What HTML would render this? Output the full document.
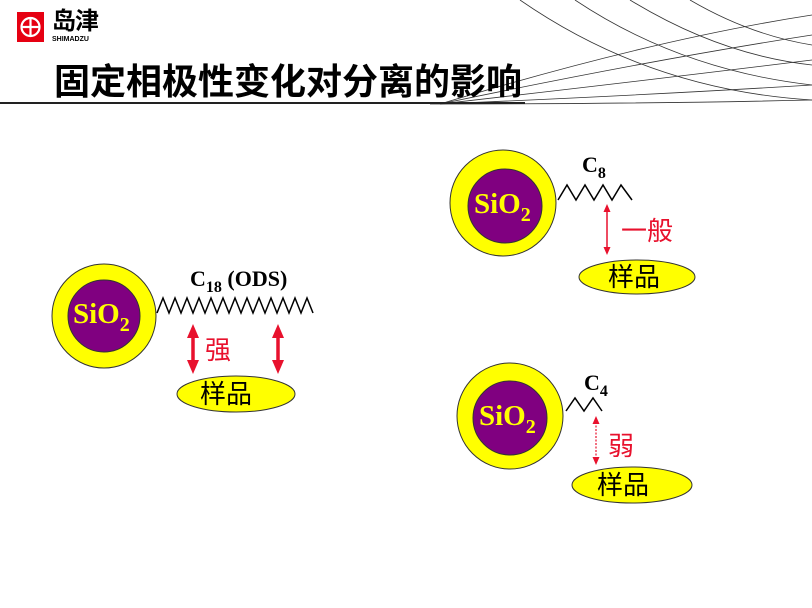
<!DOCTYPE html>
<html><head><meta charset="utf-8"><style>
body{margin:0;width:812px;height:608px;background:#fff;overflow:hidden;position:relative;font-family:"Liberation Sans","Noto Sans CJK SC",sans-serif}
.t{position:absolute;white-space:nowrap}
</style></head><body>
<svg width="812" height="608" style="position:absolute;left:0;top:0">
<g fill="none" stroke="#333" stroke-width="0.8">
<path d="M520 0 Q650 90 812 100"/>
<path d="M575 0 Q680 70 812 85"/>
<path d="M630 0 Q720 55 812 65"/>
<path d="M690 0 Q750 35 812 45"/>
<path d="M440 104 Q650 40 812 15"/>
<path d="M440 104 Q650 60 812 35"/>
<path d="M440 104 Q650 80 812 60"/>
<path d="M440 104 Q650 95 812 85"/>
<path d="M430 104 Q640 104 812 100"/>
</g>
<line x1="0" y1="103" x2="525" y2="103" stroke="#222" stroke-width="2"/>
<rect x="17" y="12" width="27" height="30" fill="#e60012"/>
<circle cx="30.5" cy="27" r="9" fill="none" stroke="#fff" stroke-width="2.2"/>
<line x1="21.5" y1="27" x2="39.5" y2="27" stroke="#fff" stroke-width="2.2"/>
<line x1="30.5" y1="18" x2="30.5" y2="36" stroke="#fff" stroke-width="2.2"/>
<defs><marker id="ah" markerUnits="userSpaceOnUse" markerWidth="14" markerHeight="12" refX="2" refY="6" orient="auto-start-reverse"><path d="M0 0 L14 6 L0 12Z" fill="#e8112d"/></marker>
<marker id="ah2" markerUnits="userSpaceOnUse" markerWidth="8" markerHeight="7" refX="2" refY="3.5" orient="auto-start-reverse"><path d="M0 0 L8 3.5 L0 7Z" fill="#e8112d"/></marker></defs>
<circle cx="104" cy="316" r="52" fill="#ffff00" stroke="#333" stroke-width="1"/>
<circle cx="104" cy="316" r="36" fill="#800080" stroke="#333" stroke-width="1"/>
<polyline fill="none" stroke="#000" stroke-width="1.5" points="157,313 163,298 169,313 175,298 181,313 187,298 193,313 199,298 205,313 211,298 217,313 223,298 229,313 235,298 241,313 247,298 253,313 259,298 265,313 271,298 277,313 283,298 289,313 295,298 301,313 307,298 313,313"/>
<line x1="193" y1="336" x2="193" y2="362" stroke="#e8112d" stroke-width="3.5" marker-start="url(#ah)" marker-end="url(#ah)"/>
<line x1="278" y1="336" x2="278" y2="362" stroke="#e8112d" stroke-width="3.5" marker-start="url(#ah)" marker-end="url(#ah)"/>
<ellipse cx="236" cy="394" rx="59" ry="18" fill="#ffff00" stroke="#333"/>
<circle cx="503" cy="203" r="53" fill="#ffff00" stroke="#333"/>
<circle cx="505" cy="206" r="37" fill="#800080" stroke="#333"/>
<polyline fill="none" stroke="#000" stroke-width="1.5" points="558,200 567,185 576,200 585,185 594,200 603,185 612,200 621,185 632,200"/>
<line x1="607" y1="210" x2="607" y2="249" stroke="#e8112d" stroke-width="1.5" marker-start="url(#ah2)" marker-end="url(#ah2)"/>
<ellipse cx="637" cy="277" rx="58" ry="17" fill="#ffff00" stroke="#333"/>
<circle cx="510" cy="416" r="53" fill="#ffff00" stroke="#333"/>
<circle cx="510" cy="418" r="37" fill="#800080" stroke="#333"/>
<polyline fill="none" stroke="#000" stroke-width="1.5" points="566,411 575,398 584,411 593,398 602,411"/>
<line x1="596" y1="422" x2="596" y2="459" stroke="#e8112d" stroke-width="1.2" stroke-dasharray="2,1.5" marker-start="url(#ah2)" marker-end="url(#ah2)"/>
<ellipse cx="632" cy="485" rx="60" ry="18" fill="#ffff00" stroke="#333"/>
</svg>
<div class="t" style="left:52px;top:9px;font-size:24px;line-height:26px;color:#000;font-weight:bold;letter-spacing:-1px">岛津</div>
<div class="t" style="left:52px;top:36px;font-size:7px;line-height:8px;font-weight:bold">SHIMADZU</div>
<div class="t" style="left:54px;top:61px;font-size:36px;line-height:42px;font-weight:bold;letter-spacing:0px">固定相极性变化对分离的影响</div>
<div class="t" style="left:73px;top:298px;font:bold 29px 'Liberation Serif',serif;color:#ffff00">SiO<span style="font-size:20px;position:relative;top:8px">2</span></div>
<div class="t" style="left:474px;top:188px;font:bold 29px 'Liberation Serif',serif;color:#ffff00">SiO<span style="font-size:20px;position:relative;top:8px">2</span></div>
<div class="t" style="left:479px;top:400px;font:bold 29px 'Liberation Serif',serif;color:#ffff00">SiO<span style="font-size:20px;position:relative;top:8px">2</span></div>
<div class="t" style="left:190px;top:266px;font:bold 22px 'Liberation Serif',serif">C<span style="font-size:16px;position:relative;top:6px">18</span> (ODS)</div>
<div class="t" style="left:582px;top:152px;font:bold 22px 'Liberation Serif',serif">C<span style="font-size:16px;position:relative;top:6px">8</span></div>
<div class="t" style="left:584px;top:370px;font:bold 22px 'Liberation Serif',serif">C<span style="font-size:16px;position:relative;top:6px">4</span></div>
<div class="t" style="left:205px;top:335px;font-size:26px;line-height:30px;color:#e8112d">强</div>
<div class="t" style="left:621px;top:216px;font-size:26px;line-height:30px;color:#e8112d">一般</div>
<div class="t" style="left:608px;top:431px;font-size:26px;line-height:30px;color:#e8112d">弱</div>
<div class="t" style="left:200px;top:379px;font-size:26px;line-height:30px">样品</div>
<div class="t" style="left:608px;top:262px;font-size:26px;line-height:30px">样品</div>
<div class="t" style="left:597px;top:470px;font-size:26px;line-height:30px">样品</div>
</body></html>
